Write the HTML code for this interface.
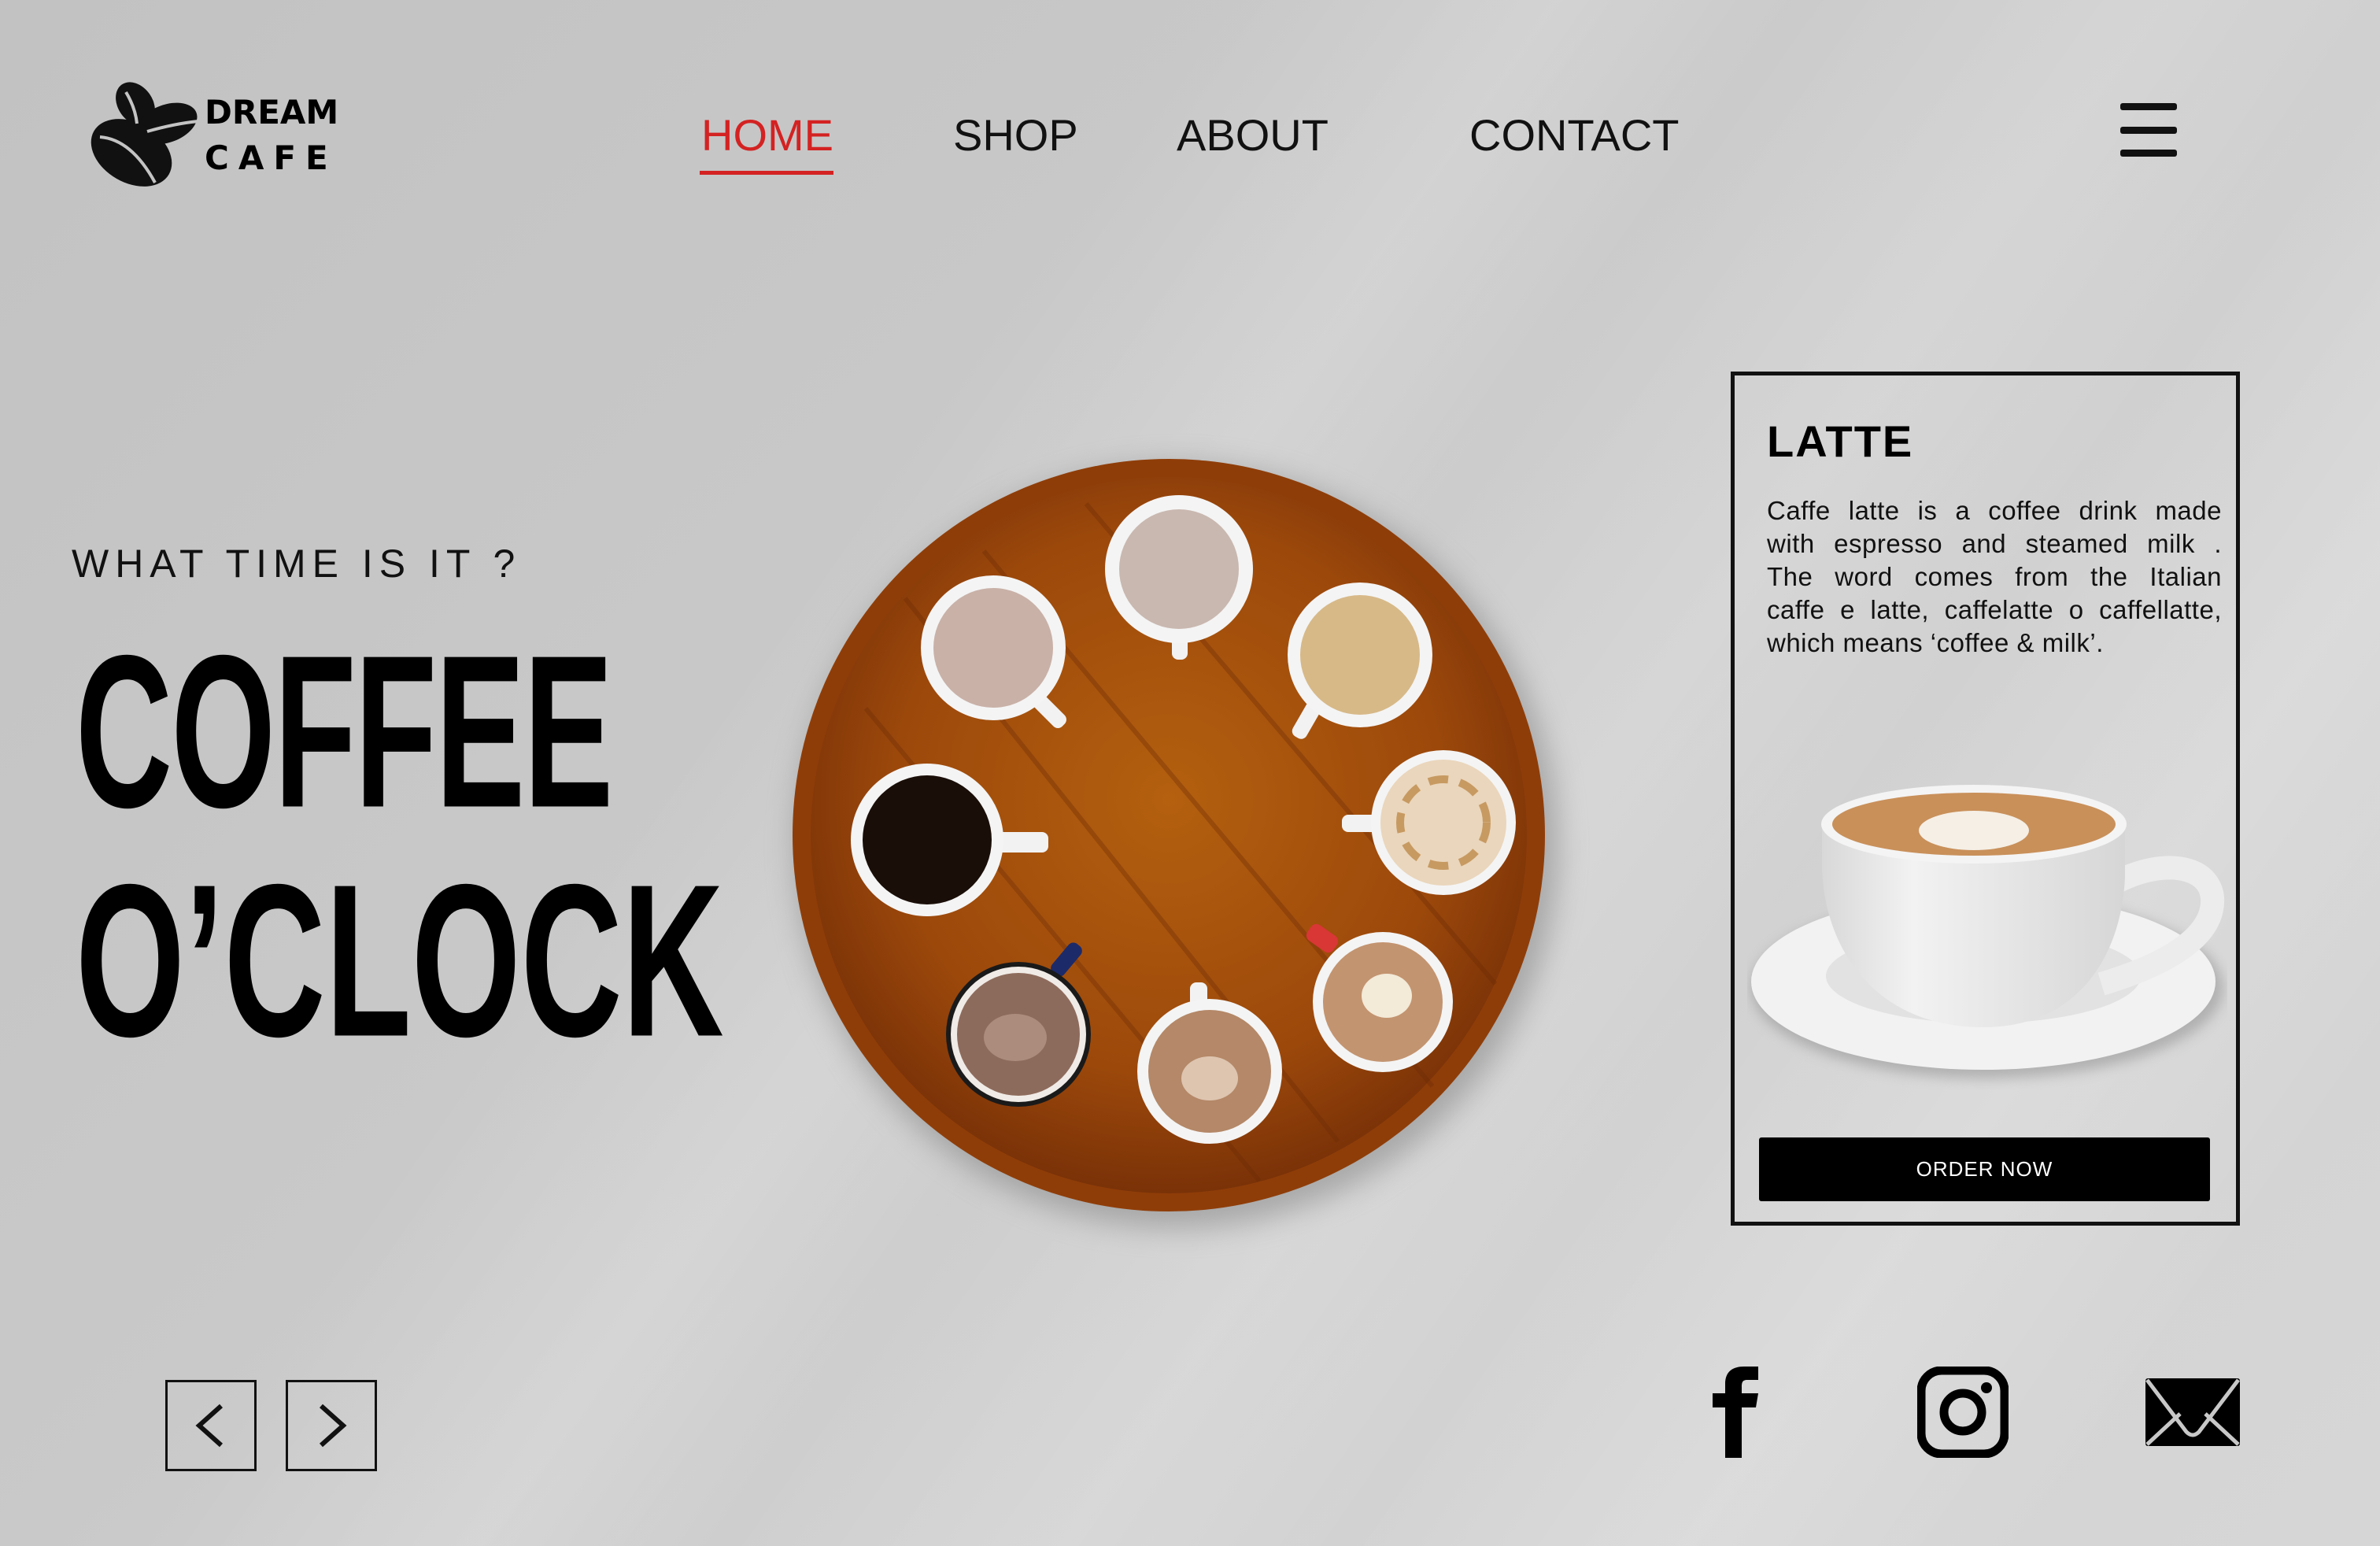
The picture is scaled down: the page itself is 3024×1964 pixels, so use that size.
<!DOCTYPE html>
<html><head><meta charset="utf-8">
<style>
*{margin:0;padding:0;box-sizing:border-box}
html,body{width:3024px;height:1964px;overflow:hidden}
body{position:relative;font-family:"Liberation Sans",sans-serif;color:#000;
background:
linear-gradient(125deg,rgba(255,255,255,0) 35%,rgba(255,255,255,.18) 45%,rgba(255,255,255,0) 52%,rgba(255,255,255,.15) 62%,rgba(255,255,255,0) 70%,rgba(255,255,255,.18) 80%,rgba(255,255,255,0) 90%),
linear-gradient(135deg,#c2c2c2 0%,#c9c9c9 40%,#d2d2d2 70%,#d6d6d6 100%);}
.abs{position:absolute}
.nav{position:absolute;top:140px;font-size:56px;line-height:64px;color:#111;letter-spacing:0px}
.big{position:absolute;left:96px;font-family:"Liberation Sans Narrow","Liberation Sans",sans-serif;font-weight:bold;font-size:203px;line-height:203px;transform-origin:0 0;white-space:nowrap;letter-spacing:-2px}
.arrow{position:absolute;top:1753px;width:116px;height:116px;border:3px solid #111}
.para span{display:block;text-align:justify;text-align-last:justify}
</style></head><body>

<!-- logo -->
<svg class="abs" style="left:112px;top:102px" width="145" height="138" viewBox="0 0 145 138">
 <g fill="#111">
  <ellipse cx="60" cy="30" rx="22" ry="30" transform="rotate(-35 60 30)"/>
  <ellipse cx="100" cy="55" rx="40" ry="24" transform="rotate(-20 100 55)"/>
  <ellipse cx="55" cy="92" rx="55" ry="38" transform="rotate(30 55 92)"/>
 </g>
 <path d="M15 72 Q55 75 85 130" stroke="#c4c4c4" stroke-width="4" fill="none"/>
 <path d="M75 65 Q110 55 140 52" stroke="#c4c4c4" stroke-width="4" fill="none"/>
 <path d="M48 15 Q60 35 62 55" stroke="#c4c4c4" stroke-width="4" fill="none"/>
</svg>
<div class="abs" style="left:260px;top:122px;font-weight:900;font-size:42px;line-height:42px;letter-spacing:0px;font-family:'DejaVu Sans','Liberation Sans',sans-serif">DREAM</div>
<div class="abs" style="left:260px;top:180px;font-weight:900;font-size:42px;line-height:42px;letter-spacing:12px;font-family:'DejaVu Sans','Liberation Sans',sans-serif">CAFE</div>

<!-- nav -->
<div class="nav" style="left:891px;color:#d42222">HOME</div>
<div class="abs" style="left:889px;top:217px;width:170px;height:5px;background:#d42222"></div>
<div class="nav" style="left:1211px">SHOP</div>
<div class="nav" style="left:1495px">ABOUT</div>
<div class="nav" style="left:1867px">CONTACT</div>
<div class="abs" style="left:2694px;top:131px;width:72px;height:9px;background:#111;border-radius:3px"></div>
<div class="abs" style="left:2694px;top:161px;width:72px;height:9px;background:#111;border-radius:3px"></div>
<div class="abs" style="left:2694px;top:190px;width:72px;height:9px;background:#111;border-radius:3px"></div>

<!-- hero text -->
<div class="abs" style="left:91px;top:684px;font-size:50px;line-height:64px;letter-spacing:8px;color:#111">WHAT TIME IS IT ?</div>
<div class="big" style="top:792px;transform:scale(0.84,1.36)">COFFEE</div>
<div class="big" style="top:1083px;letter-spacing:0px;transform:scale(0.88,1.36)">O’CLOCK</div>

<!-- tray -->
<svg class="abs" style="left:960px;top:540px" width="1060" height="1060" viewBox="960 540 1060 1060">
 <defs>
  <radialGradient id="tr" cx="50%" cy="45%" r="55%">
   <stop offset="0" stop-color="#b4600f"/><stop offset=".7" stop-color="#9c480b"/><stop offset="1" stop-color="#7a3207"/>
  </radialGradient>
  <filter id="sh" x="-20%" y="-20%" width="140%" height="140%"><feGaussianBlur stdDeviation="18"/></filter>
 </defs>
 <circle cx="1495" cy="1075" r="485" fill="#7a7a7a" opacity=".5" filter="url(#sh)"/>
 <circle cx="1485" cy="1061" r="478" fill="#8f3d08"/>
 <circle cx="1485" cy="1061" r="455" fill="url(#tr)"/>
 <g stroke="#6b2a05" stroke-width="6" opacity=".35" fill="none">
  <path d="M1150 760 L1700 1450"/><path d="M1250 700 L1820 1380"/><path d="M1100 900 L1600 1500"/><path d="M1380 640 L1900 1250"/>
 </g>
 <g>
  <rect x="1489" y="780" width="20" height="58" rx="8" fill="#f2f2f2"/>
  <circle cx="1498" cy="723" r="94" fill="#f4f4f4"/><circle cx="1498" cy="723" r="76" fill="#c9b8b0"/>
  <rect x="1320" y="870" width="20" height="60" rx="8" fill="#f2f2f2" transform="rotate(-45 1330 900)"/>
  <circle cx="1262" cy="823" r="92" fill="#f4f4f4"/><circle cx="1262" cy="823" r="76" fill="#c9b1a8"/>
  <rect x="1650" y="890" width="20" height="50" rx="8" fill="#f2f2f2" transform="rotate(30 1660 915)"/>
  <circle cx="1728" cy="832" r="92" fill="#f4f4f4"/><circle cx="1728" cy="832" r="76" fill="#d7b988"/>
  <rect x="1260" y="1057" width="72" height="26" rx="8" fill="#f2f2f2"/>
  <circle cx="1178" cy="1067" r="97" fill="#f4f4f4"/><circle cx="1178" cy="1067" r="82" fill="#1a0e08"/>
  <rect x="1705" y="1035" width="50" height="22" rx="8" fill="#f2f2f2"/>
  <circle cx="1834" cy="1045" r="92" fill="#f4f4f4"/><circle cx="1834" cy="1045" r="80" fill="#ead6bc"/>
  <circle cx="1834" cy="1045" r="55" fill="none" stroke="#c79a62" stroke-width="10" stroke-dasharray="25 15"/>
  <rect x="1660" y="1180" width="40" height="24" rx="8" fill="#d93636" transform="rotate(35 1680 1192)"/>
  <circle cx="1757" cy="1273" r="89" fill="#f4f4f4"/><circle cx="1757" cy="1273" r="76" fill="#c39470"/>
  <ellipse cx="1762" cy="1265" rx="32" ry="28" fill="#f3ead8"/>
  <rect x="1512" y="1248" width="22" height="50" rx="8" fill="#f2f2f2"/>
  <circle cx="1537" cy="1361" r="92" fill="#f4f4f4"/><circle cx="1537" cy="1361" r="78" fill="#b48868"/>
  <ellipse cx="1537" cy="1370" rx="36" ry="28" fill="#e9d5c2" opacity=".8"/>
  <rect x="1345" y="1195" width="20" height="48" rx="8" fill="#1c2a6a" transform="rotate(40 1355 1219)"/>
  <circle cx="1294" cy="1314" r="92" fill="#1a1a1a"/><circle cx="1294" cy="1314" r="86" fill="#f0ebe6"/><circle cx="1294" cy="1314" r="78" fill="#8d6b5c"/>
  <ellipse cx="1290" cy="1318" rx="40" ry="30" fill="#b89a8c" opacity=".7"/>
 </g>
</svg>

<!-- card -->
<div class="abs" style="left:2199px;top:472px;width:647px;height:1085px;border:5px solid #111"></div>
<div class="abs" style="left:2245px;top:528px;font-weight:bold;font-size:56px;line-height:66px;letter-spacing:2px">LATTE</div>
<div class="abs para" style="left:2245px;top:628px;width:578px;font-size:33px;line-height:42px;color:#111;letter-spacing:0.5px">
<span>Caffe latte is a coffee drink made</span>
<span>with espresso and steamed milk .</span>
<span>The word comes from the Italian</span>
<span>caffe e latte, caffelatte o caffellatte,</span>
<span style="text-align-last:left">which means ‘coffee &amp; milk’.</span>
</div>
<svg class="abs" style="left:2220px;top:985px" width="610" height="400" viewBox="0 0 610 400">
 <defs>
  <linearGradient id="cup" x1="0" x2="1"><stop offset="0" stop-color="#d8d8d8"/><stop offset=".3" stop-color="#f2f2f2"/><stop offset="1" stop-color="#d6d6d6"/></linearGradient>
  <filter id="b"><feGaussianBlur stdDeviation="8"/></filter>
 </defs>
 <ellipse cx="305" cy="270" rx="300" ry="115" fill="#888" opacity=".5" filter="url(#b)"/>
 <ellipse cx="300" cy="262" rx="295" ry="112" fill="#f2f2f2"/>
 <ellipse cx="300" cy="255" rx="200" ry="60" fill="#e2e2e2"/>
 <path d="M470 135 C540 100 600 120 590 170 C580 220 500 250 450 265" stroke="#ececec" stroke-width="30" fill="none"/>
 <path d="M95 60 L95 120 C100 230 170 320 300 320 C420 320 475 230 480 130 L480 60 Z" fill="url(#cup)"/>
 <ellipse cx="288" cy="62" rx="194" ry="50" fill="#f4f4f4"/>
 <ellipse cx="288" cy="62" rx="180" ry="40" fill="#c9905a"/>
 <ellipse cx="288" cy="70" rx="70" ry="25" fill="#f5efe6"/>
</svg>
<div class="abs" style="left:2235px;top:1445px;width:573px;height:81px;background:#000;border-radius:3px;color:#fff;font-size:26px;line-height:81px;text-align:center;letter-spacing:1px">ORDER NOW</div>

<!-- arrows -->
<div class="arrow" style="left:210px"><svg width="110" height="110"><path d="M68 30 L40 55 L68 80" stroke="#111" stroke-width="6" fill="none"/></svg></div>
<div class="arrow" style="left:363px"><svg width="110" height="110"><path d="M42 30 L70 55 L42 80" stroke="#111" stroke-width="6" fill="none"/></svg></div>

<!-- social -->
<svg class="abs" style="left:2172px;top:1736px" width="70" height="116" viewBox="0 0 70 116">
 <path d="M20 116 V52 H4 V34 H20 V22 C20 6 30 0 44 0 H62 V17 H48 C42 17 41 20 41 26 V34 H62 L59 52 H41 V116 Z" fill="#000"/>
</svg>
<svg class="abs" style="left:2436px;top:1736px" width="116" height="116" viewBox="0 0 116 116">
 <rect x="5" y="5" width="106" height="106" rx="26" fill="none" stroke="#000" stroke-width="11"/>
 <circle cx="58" cy="58" r="24" fill="none" stroke="#000" stroke-width="11"/>
 <circle cx="88" cy="27" r="7" fill="#000"/>
</svg>
<svg class="abs" style="left:2726px;top:1751px" width="120" height="86" viewBox="0 0 120 86">
 <rect x="0" y="0" width="120" height="86" rx="3" fill="#000"/>
 <path d="M2 2 L52 68 Q60 76 68 68 L118 2 M2 84 L44 45 M118 84 L76 45" stroke="#c8c8c8" stroke-width="5" fill="none"/>
</svg>

</body></html>
